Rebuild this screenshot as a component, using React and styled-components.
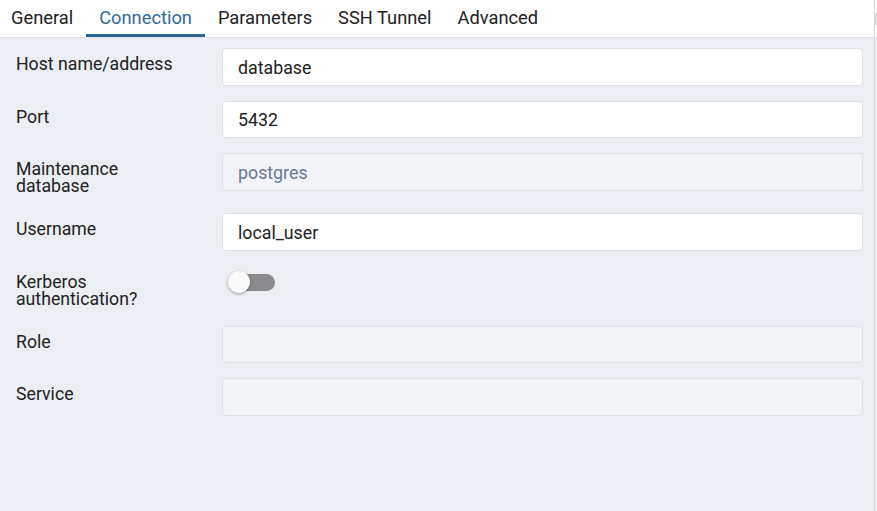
import React from 'react'
import styled, { createGlobalStyle } from 'styled-components'

const GlobalStyle = createGlobalStyle`
  html, body {
    margin: 0;
    padding: 0;
    background: #ffffff;
  }
  body {
    font-family: Roboto, "Liberation Sans", sans-serif;
    color: #222222;
  }
`

const Frame = styled.div`
  display: flex;
  width: 877px;
  height: 511px;
  overflow: hidden;
`

const Panel = styled.div`
  flex: 0 0 874px;
  display: flex;
  flex-direction: column;
  background: #ebeef3;
  border-right: 1px solid #d4d6da;
`

const Scroll = styled.div`
  flex: 1;
  display: flex;
  flex-direction: column;
  background: #e9ebef;
`

const ScrollTop = styled.div`
  height: 37px;
  background: #ffffff;
  display: flex;
  align-items: center;
`

const Thumb = styled.div`
  width: 100%;
  height: 12px;
  background: #d9dbdf;
`

const TabBar = styled.div`
  display: flex;
  height: 37px;
  background: #ffffff;
  border-bottom: 1px solid #dde1e7;
`

const Tab = styled.div`
  display: flex;
  align-items: center;
  box-sizing: border-box;
  height: 37px;
  padding: 1px 13px 0;
  font-size: 18.3px;
  color: ${props => (props.active ? '#326a9c' : '#222222')};
  border-bottom: 3px solid ${props => (props.active ? '#2c6390' : 'transparent')};
  &:first-child {
    padding-left: 11px;
  }
`

const Form = styled.div`
  display: flex;
  flex-direction: column;
  gap: 15px;
  padding: 10px 11px 0 16px;
`

const Row = styled.div`
  display: flex;
  align-items: flex-start;
`

const Label = styled.div`
  flex: 0 0 206px;
  font-size: 17.7px;
  line-height: 17px;
  padding: 8px 0 3px;
`

const Field = styled.div`
  flex: 1;
  box-sizing: border-box;
  height: 37.6px;
  display: flex;
  align-items: center;
  padding: 1px 15px 0;
  font-size: 17.8px;
  border: 1px solid #dde1e7;
  border-radius: 4px;
  background: ${props => (props.disabled ? '#f3f4f8' : '#ffffff')};
  color: ${props => (props.disabled ? '#6a7890' : '#222222')};
`

const SwitchWrap = styled.div`
  position: relative;
  width: 54px;
  height: 26px;
  margin-top: 4px;
`

const Track = styled.div`
  position: absolute;
  left: 8px;
  top: 4px;
  width: 45px;
  height: 17px;
  border-radius: 9px;
  background: #8b8b8e;
`

const Knob = styled.div`
  position: absolute;
  left: 6px;
  top: 1px;
  width: 22px;
  height: 22px;
  border-radius: 50%;
  background: #fafafa;
  box-shadow: 0 1px 3px rgba(0, 0, 0, 0.35);
`

const rows = [
  { label: 'Host name/address', value: 'database' },
  { label: 'Port', value: '5432' },
  { label: ['Maintenance', 'database'], value: 'postgres', disabled: true },
  { label: 'Username', value: 'local_user' },
  { label: ['Kerberos', 'authentication?'], toggle: true },
  { label: 'Role', value: '', disabled: true },
  { label: 'Service', value: '', disabled: true },
]

const tabs = ['General', 'Connection', 'Parameters', 'SSH Tunnel', 'Advanced']

const Toggle = () => (
  <SwitchWrap>
    <Track />
    <Knob />
  </SwitchWrap>
)

const App = () => (
  <Frame>
    <GlobalStyle />
    <Panel>
      <TabBar>
        {tabs.map(t => (
          <Tab key={t} active={t === 'Connection'}>
            {t}
          </Tab>
        ))}
      </TabBar>
      <Form>
        {rows.map((r, i) => (
          <Row key={i}>
            <Label>
              {Array.isArray(r.label)
                ? r.label.map(l => <div key={l}>{l}</div>)
                : r.label}
            </Label>
            {r.toggle ? (
              <Toggle />
            ) : (
              <Field disabled={r.disabled}>{r.value}</Field>
            )}
          </Row>
        ))}
      </Form>
    </Panel>
    <Scroll>
      <ScrollTop>
        <Thumb />
      </ScrollTop>
    </Scroll>
  </Frame>
)

export default App
